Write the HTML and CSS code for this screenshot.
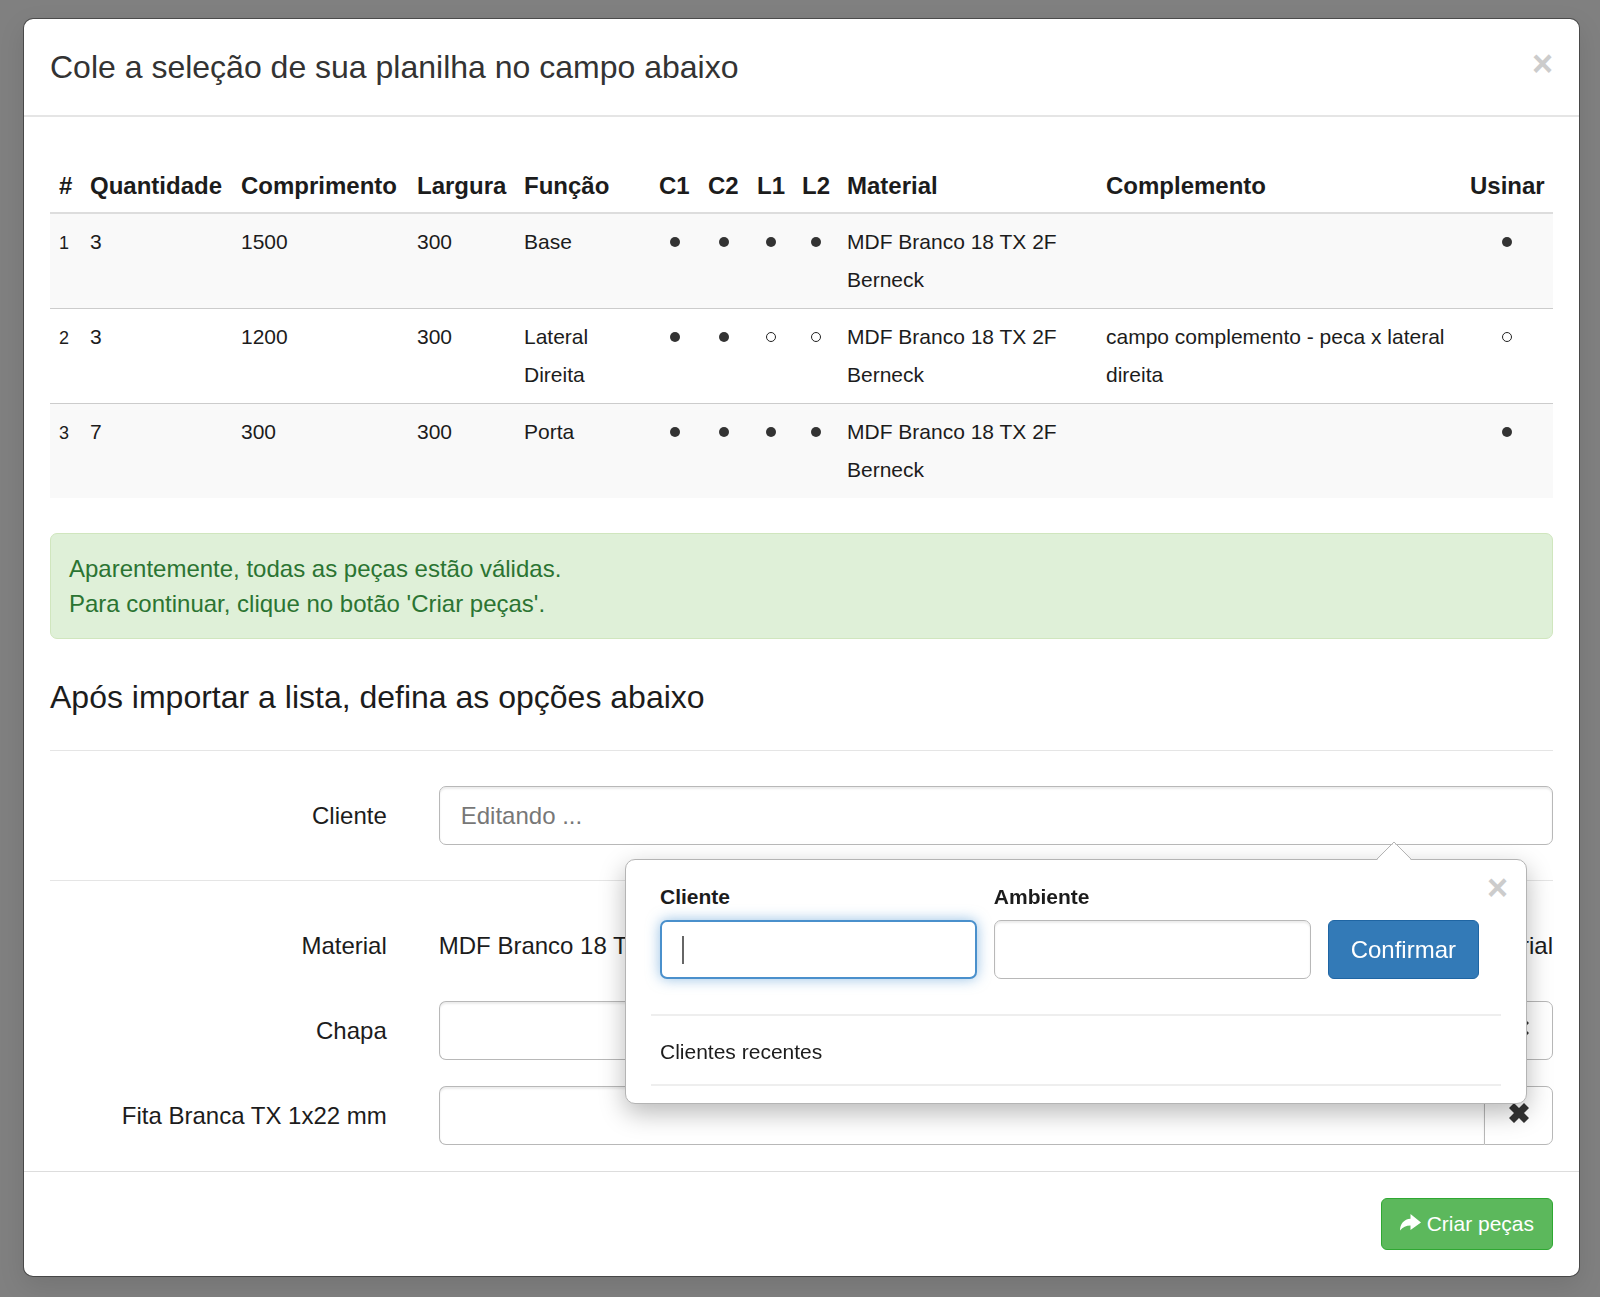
FILE: index.html
```html
<!DOCTYPE html>
<html lang="pt-BR">
<head>
    <meta charset="UTF-8">
    <meta name="viewport" content="width=device-width, initial-scale=1">
    <title>Importar lista de peças</title>
    <link rel="stylesheet" href="styles.css">
</head>
<body>
<div class="modal" role="dialog" aria-labelledby="modalTitle">
    <div class="modal-header">
        <h4 class="modal-title" id="modalTitle">Cole a seleção de sua planilha no campo abaixo</h4>
        <button type="button" class="close" aria-label="Fechar">×</button>
    </div>

    <div class="modal-body">
        <table class="table">
            <thead>
            <tr>
                <th class="col-num">#</th>
                <th class="col-qtd">Quantidade</th>
                <th class="col-comp">Comprimento</th>
                <th class="col-larg">Largura</th>
                <th class="col-func">Função</th>
                <th class="col-c">C1</th>
                <th class="col-c">C2</th>
                <th class="col-l">L1</th>
                <th class="col-l">L2</th>
                <th class="col-mat">Material</th>
                <th>Complemento</th>
                <th class="col-usinar">Usinar</th>
            </tr>
            </thead>
            <tbody>
            <tr>
                <td><small>1</small></td>
                <td>3</td>
                <td>1500</td>
                <td>300</td>
                <td>Base</td>
                <td class="mark"><span class="dot"></span></td>
                <td class="mark"><span class="dot"></span></td>
                <td class="mark"><span class="dot"></span></td>
                <td class="mark"><span class="dot"></span></td>
                <td>MDF Branco 18 TX 2F Berneck</td>
                <td></td>
                <td class="mark"><span class="dot"></span></td>
            </tr>
            <tr>
                <td><small>2</small></td>
                <td>3</td>
                <td>1200</td>
                <td>300</td>
                <td>Lateral Direita</td>
                <td class="mark"><span class="dot"></span></td>
                <td class="mark"><span class="dot"></span></td>
                <td class="mark"><span class="dot dot-empty"></span></td>
                <td class="mark"><span class="dot dot-empty"></span></td>
                <td>MDF Branco 18 TX 2F Berneck</td>
                <td>campo complemento - peca x lateral direita</td>
                <td class="mark"><span class="dot dot-empty"></span></td>
            </tr>
            <tr>
                <td><small>3</small></td>
                <td>7</td>
                <td>300</td>
                <td>300</td>
                <td>Porta</td>
                <td class="mark"><span class="dot"></span></td>
                <td class="mark"><span class="dot"></span></td>
                <td class="mark"><span class="dot"></span></td>
                <td class="mark"><span class="dot"></span></td>
                <td>MDF Branco 18 TX 2F Berneck</td>
                <td></td>
                <td class="mark"><span class="dot"></span></td>
            </tr>
            </tbody>
        </table>

        <div class="alert">
            Aparentemente, todas as peças estão válidas.<br>
            Para continuar, clique no botão 'Criar peças'.
        </div>

        <h4 class="section-title">Após importar a lista, defina as opções abaixo</h4>
        <hr class="divider">

        <div class="form-row">
            <label class="form-label" for="cliente">Cliente</label>
            <div class="form-field">
                <input class="form-control" id="cliente" type="text" placeholder="Editando ...">

                <!-- popover cliente / ambiente -->
                <div class="popover">
                    <svg class="popover-arrow" viewBox="0 0 38 20">
                        <path class="arrow-fill" d="M1 20 L19 2 L37 20 Z"/>
                        <path class="arrow-line" d="M1 19 L19 1 L37 19"/>
                    </svg>
                    <button type="button" class="close popover-close" aria-label="Fechar">×</button>
                    <div class="popover-form">
                        <div class="popover-group">
                            <label for="popCliente">Cliente</label>
                            <input class="form-control focused" id="popCliente" type="text" autofocus>
                        </div>
                        <div class="popover-group">
                            <label for="popAmbiente">Ambiente</label>
                            <input class="form-control" id="popAmbiente" type="text">
                        </div>
                        <button type="button" class="btn btn-primary">Confirmar</button>
                    </div>
                    <hr class="popover-divider">
                    <p class="popover-text">Clientes recentes</p>
                    <hr class="popover-divider">
                </div>
            </div>
        </div>

        <hr class="divider">

        <div class="form-row">
            <span class="form-label">Material</span>
            <div class="form-field form-static">
                <span>MDF Branco 18 TX 2F Berneck</span>
                <span>Material</span>
            </div>
        </div>
        <div class="form-row">
            <label class="form-label" for="chapa">Chapa</label>
            <div class="form-field input-group">
                <input class="form-control" id="chapa" type="text">
                <button type="button" class="addon" aria-label="Limpar chapa">
                    <svg class="icon-remove" viewBox="0 0 20 20"><path d="M5 0 L10 5 L15 0 L20 5 L15 10 L20 15 L15 20 L10 15 L5 20 L0 15 L5 10 L0 5 Z"/></svg>
                </button>
            </div>
        </div>
        <div class="form-row">
            <label class="form-label" for="fita">Fita Branca TX 1x22 mm</label>
            <div class="form-field input-group">
                <input class="form-control" id="fita" type="text">
                <button type="button" class="addon" aria-label="Limpar fita">
                    <svg class="icon-remove" viewBox="0 0 20 20"><path d="M5 0 L10 5 L15 0 L20 5 L15 10 L20 15 L15 20 L10 15 L5 20 L0 15 L5 10 L0 5 Z"/></svg>
                </button>
            </div>
        </div>
    </div>

    <div class="modal-footer">
        <button type="button" class="btn btn-success">
            <svg class="icon-share" viewBox="0 0 21 17"><path d="M10.500 0 L21 8.500 L10.500 16 V11.500 C6 11.500 3 13 0 16.500 C0 10 4 5 10.500 4.700 Z"/></svg>
            Criar peças
        </button>
    </div>
</div>
</body>
</html>
```
FILE: styles.css
```css
* {
    box-sizing: border-box;
}

body {
    margin: 0;
    padding: 18px 20px 20px 23px;
    background-color: #808080;
    color: #1c1c1c;
    font-family: "Liberation Sans", Arial, sans-serif;
    font-size: 24px;
    line-height: 35px;
}

input, button {
    font-family: inherit;
}

/* modal */
.modal {
    background-color: #fff;
    background-clip: padding-box;
    border: 1px solid rgba(0, 0, 0, .4);
    border-radius: 10px;
    box-shadow: 0 9px 26px rgba(0, 0, 0, .1);
}

.modal-header {
    display: flex;
    justify-content: space-between;
    align-items: flex-start;
    padding: 26px;
    border-bottom: 2px solid #e5e5e5;
}

.modal-title {
    margin: 0;
    color: #333;
    font-size: 32px;
    font-weight: 500;
    line-height: 44px;
}

.modal-body {
    padding: 42px 26px 26px;
}

.modal-footer {
    display: flex;
    justify-content: flex-end;
    padding: 26px;
    border-top: 1px solid #ddd;
}

.close {
    padding: 0;
    border: 0;
    background: none;
    color: #ccc;
    font-size: 36px;
    font-weight: bold;
    line-height: 38px;
}

/* tabela de peças */
.table {
    width: 100%;
    table-layout: fixed;
    border-collapse: collapse;
}

.table th {
    padding: 9px;
    border-bottom: 2px solid #ddd;
    text-align: left;
    white-space: nowrap;
}

.table td {
    padding: 9px;
    border-top: 1px solid #ccc;
    font-size: 21px;
    line-height: 38px;
    vertical-align: top;
}

.table small {
    font-size: 18px;
}

.table tbody tr:nth-child(odd) {
    background-color: #f9f9f9;
}

.table .mark {
    text-align: center;
    line-height: 0;
    padding-top: 23px;
}

.col-num { width: 31px; }
.col-qtd { width: 151px; }
.col-comp { width: 176px; }
.col-larg { width: 107px; }
.col-func { width: 135px; }
.col-c { width: 49px; }
.col-l { width: 45px; }
.col-mat { width: 259px; }
.col-usinar { width: 92px; }

.dot {
    display: inline-block;
    width: 10px;
    height: 10px;
    border-radius: 50%;
    background-color: #333;
}

.dot-empty {
    border: 1px solid #222;
    background: none;
}

.alert {
    margin-top: 35px;
    padding: 17px 18px;
    border: 1px solid #d0e6be;
    border-radius: 7px;
    background-color: #dff0d8;
    color: #2b7432;
}

.section-title {
    margin: 41px 0 33px;
    font-size: 32px;
    font-weight: 500;
}

.divider {
    margin: 35px 0;
    border: 0;
    border-top: 1px solid #e5e5e5;
}

/* formulário */
.form-row {
    display: flex;
    margin: 0 -26px;
}

.form-row + .form-row {
    margin-top: 26px;
}

.form-label {
    width: 25%;
    padding: 12px 26px;
    text-align: right;
}

.form-field {
    position: relative;
    width: 75%;
    padding: 0 26px;
}

.form-static {
    display: flex;
    justify-content: space-between;
    padding-top: 12px;
    padding-bottom: 12px;
}

.form-control {
    display: block;
    width: 100%;
    height: 59px;
    padding: 0 21px;
    border: 1px solid #b8b8b8;
    border-radius: 7px;
    background-color: #fff;
    box-shadow: inset 0 2px 2px rgba(0, 0, 0, .075);
    color: #555;
    font-size: 24px;
    outline: none;
}

.form-control::placeholder {
    color: #777;
}

/* cursor de texto desenhado no fundo do campo */
.form-control.focused {
    border: 2px solid #4a90cc;
    background: #fff linear-gradient(#666, #666) 20px center / 2px 28px no-repeat;
    box-shadow: 0 0 14px rgba(80, 150, 210, .6);
    caret-color: transparent;
}

.input-group {
    display: flex;
}

.input-group .form-control {
    flex: 1;
    border-right: 0;
    border-radius: 7px 0 0 7px;
}

.addon {
    width: 69px;
    height: 59px;
    padding: 0 0 5px;
    border: 1px solid #b8b8b8;
    border-radius: 0 7px 7px 0;
    background-color: #fff;
}

.icon-remove {
    width: 20px;
    height: 20px;
    fill: #333;
    vertical-align: middle;
}

.btn {
    border: 1px solid;
    border-radius: 6px;
    color: #fff;
    white-space: nowrap;
}

.btn-primary {
    height: 59px;
    padding: 0 22px;
    border-color: #1f65a3;
    background-color: #337ab7;
    font-size: 24px;
}

.btn-success {
    display: flex;
    align-items: center;
    gap: 6px;
    height: 52px;
    padding: 0 18px;
    border-color: #2fa832;
    background-color: #5cb85c;
    font-size: 21px;
}

.icon-share {
    width: 21px;
    height: 17px;
    margin-bottom: 4px;
    fill: #fff;
}

/* popover */
.popover {
    position: absolute;
    z-index: 10;
    top: 73px;
    right: 52px;
    width: 902px;
    padding: 18px 25px 17px;
    border: 1px solid #b4b4b4;
    border-radius: 10px;
    background-color: #fff;
    box-shadow: 0 9px 26px rgba(0, 0, 0, .28);
}

.popover-arrow {
    position: absolute;
    top: -19px;
    right: 113px;
    width: 38px;
    height: 20px;
}

.arrow-fill {
    fill: #fff;
}

.arrow-line {
    fill: none;
    stroke: #b4b4b4;
}

.popover-close {
    position: absolute;
    top: 9px;
    right: 18px;
}

.popover-form {
    display: flex;
    align-items: flex-end;
    gap: 17px;
    padding: 0 22px 0 9px;
}

.popover-group {
    flex: 1;
}

.popover-group label {
    display: block;
    margin-bottom: 5px;
    font-size: 21px;
    font-weight: bold;
    line-height: 37px;
}

.popover-divider {
    margin: 35px 0 0;
    border: 0;
    border-top: 2px solid #eee;
}

.popover-text {
    margin: 18px 9px 0;
    font-size: 21px;
    line-height: 36px;
}

.popover-text + .popover-divider {
    margin-top: 14px;
}
```
